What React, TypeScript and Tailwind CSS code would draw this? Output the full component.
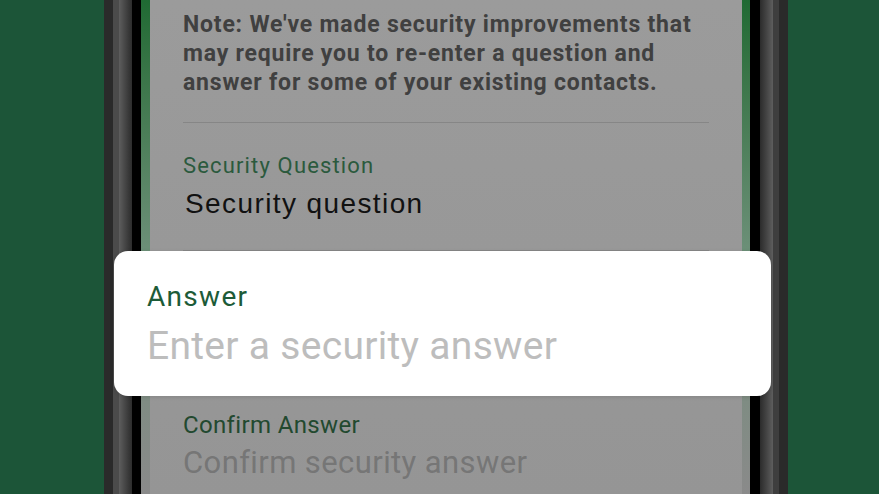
export default function App() {
  return (
    <div className="relative w-[879px] h-[494px] overflow-hidden bg-[#1c5538] flex" style={{ fontFamily: "Roboto, 'Noto Sans', sans-serif" }}>
      <div className="w-[104px] shrink-0" />
      {/* left bezel */}
      <div className="flex h-full shrink-0">
        <div className="w-[9px] bg-[#2a2a2a]" />
        <div className="w-[6px] bg-[#4b4b4b]" />
        <div className="w-[13px] bg-gradient-to-r from-[#5e5e5e] to-[#2c2c2c]" />
        <div className="w-[9px] bg-black" />
        <div className="w-[9px] bg-gradient-to-b from-[#1f6a33] via-[#6b8f77] to-[#8a8a8a]" />
      </div>

      {/* screen */}
      <div className="w-[592px] shrink-0 h-full bg-gradient-to-b from-[#9b9b9b] to-[#959595] px-[33px]">
        <p className="pt-[10px] text-[23px] leading-[29px] font-bold text-[#404040] tracking-[0.8px]">
          Note: We've made security improvements that may require you to re-enter a question and answer for some of your existing contacts.
        </p>
        <div className="mt-[25px] h-px bg-[#868686]" />
        <div className="mt-[30px] text-[22px] leading-[26px] text-[#2b5a3d] tracking-[1.15px]">Security Question</div>
        <div className="mt-[9px] text-[28px] leading-[32px] text-[#111111] pl-[2px] tracking-[1.4px]" style={{ fontFamily: "'Liberation Sans', Arial, sans-serif" }}>
          Security question
        </div>
        <div className="mt-[30px] h-px bg-[#868686]" />
        <div className="h-[160px]" />
        <div className="text-[24px] leading-[28px] text-[#22492f] tracking-[0.35px]">Confirm Answer</div>
        <div className="mt-[6px] text-[31px] leading-[36px] text-[#767676] tracking-[0.4px]">Confirm security answer</div>
      </div>

      {/* right bezel */}
      <div className="flex h-full shrink-0">
        <div className="w-[8px] bg-gradient-to-b from-[#1f6a33] via-[#6b8f77] to-[#8a8a8a]" />
        <div className="w-[10px] bg-black" />
        <div className="w-[13px] bg-gradient-to-r from-[#2c2c2c] to-[#5e5e5e]" />
        <div className="w-[6px] bg-[#3e3e3e]" />
        <div className="w-[9px] bg-[#2a2a2a]" />
      </div>

      {/* focused answer field */}
      <div className="absolute left-[114px] top-[251px] w-[657px] h-[145px] rounded-[14px] bg-white px-[33px] shadow-[0_1px_4px_rgba(0,0,0,0.12)]">
        <div className="pt-[30px] text-[28px] leading-[32px] text-[#1d5b38] tracking-[1.3px]">Answer</div>
        <div className="mt-[11px] text-[39px] leading-[44px] text-[#bdbdbd] tracking-[0.3px]">Enter a security answer</div>
      </div>
    </div>
  )
}
